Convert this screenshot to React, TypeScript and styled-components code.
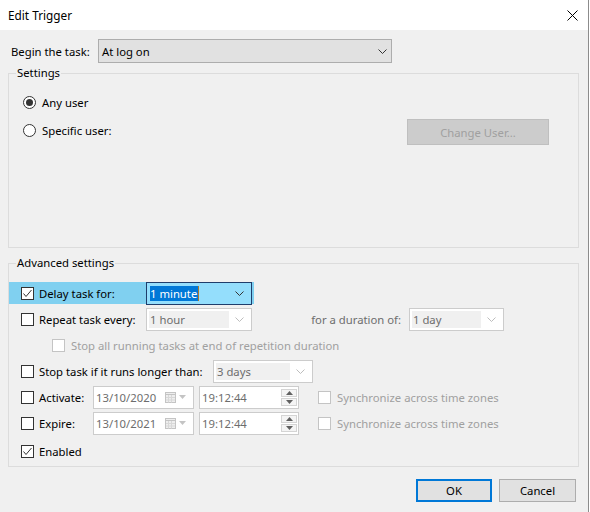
import styled, { createGlobalStyle } from 'styled-components';

const GlobalStyle = createGlobalStyle`
    html, body {
        margin: 0;
        padding: 0;
        background: #ffffff;
    }
    body {
        font-family: "Noto Sans", "DejaVu Sans", sans-serif;
        font-size: 11.3px;
        color: #000000;
    }
    * {
        box-sizing: border-box;
    }
`;

const Chevron = ({ color }: { color: string }) => (
    <svg width="9" height="5" viewBox="0 0 9 5">
        <polyline points="0.5,0.5 4.5,4.5 8.5,0.5" fill="none" stroke={color} strokeWidth="1" />
    </svg>
);

const CheckMark = () => (
    <svg width="11" height="11" viewBox="0 0 11 11">
        <polyline points="1.5,5.5 4,8.5 9.5,2" fill="none" stroke="#333333" strokeWidth="1" />
    </svg>
);

const CalendarIcon = () => (
    <svg width="11" height="11" viewBox="0 0 11 11">
        <rect x="0.5" y="0.5" width="10" height="10" fill="#eeeeee" stroke="#c4c4c4" />
        <line x1="0.5" y1="2.5" x2="10.5" y2="2.5" stroke="#c4c4c4" />
        <line x1="3.5" y1="3" x2="3.5" y2="10.5" stroke="#d8d8d8" />
        <line x1="6.5" y1="3" x2="6.5" y2="10.5" stroke="#d8d8d8" />
        <line x1="1" y1="5.5" x2="10" y2="5.5" stroke="#d8d8d8" />
        <line x1="1" y1="8" x2="10" y2="8" stroke="#d8d8d8" />
    </svg>
);

const Triangle = ({ up, color }: { up?: boolean; color: string }) => (
    <svg width="7" height="4" viewBox="0 0 7 4">
        <polygon points={up ? '0,4 7,4 3.5,0' : '0,0 7,0 3.5,4'} fill={color} />
    </svg>
);

const Checkbox = ({ checked, disabled }: { checked?: boolean; disabled?: boolean }) => (
    <CheckBoxFrame $disabled={disabled}>{checked ? <CheckMark /> : null}</CheckBoxFrame>
);

const Combo = ({ value, width, active }: { value: string; width: number; active?: boolean }) => (
    <ComboBox $width={width} $active={active}>
        <ComboText $active={active}>
            {active ? (
                <>
                    <Selected>{value}</Selected>
                    <Caret />
                </>
            ) : (
                value
            )}
        </ComboText>
        <ComboArrow>
            <Chevron color={active ? '#333333' : '#bdbdbd'} />
        </ComboArrow>
    </ComboBox>
);

const DatePicker = ({ value }: { value: string }) => (
    <DateBox>
        <FieldText>{value}</FieldText>
        <DateIcons>
            <CalendarIcon />
            <Triangle color="#c4c4c4" />
        </DateIcons>
    </DateBox>
);

const TimePicker = ({ value }: { value: string }) => (
    <TimeBox>
        <FieldText>{value}</FieldText>
        <Spinner>
            <SpinButton>
                <Triangle up color="#606060" />
            </SpinButton>
            <SpinButton>
                <Triangle color="#606060" />
            </SpinButton>
        </Spinner>
    </TimeBox>
);

const App = () => {
    return (
        <>
            <GlobalStyle />
            <Window>
                <TitleBar>
                    <span>Edit Trigger</span>
                    <svg width="11" height="11" viewBox="0 0 11 11">
                        <line x1="0.5" y1="0.5" x2="10.5" y2="10.5" stroke="#000" strokeWidth="1" />
                        <line x1="10.5" y1="0.5" x2="0.5" y2="10.5" stroke="#000" strokeWidth="1" />
                    </svg>
                </TitleBar>
                <Body>
                    <TopRow>
                        <TopLabel>Begin the task:</TopLabel>
                        <Select>
                            <span>At log on</span>
                            <Chevron color="#333333" />
                        </Select>
                    </TopRow>

                    <GroupBox $top={2}>
                        <GroupLegend>Settings</GroupLegend>
                        <SettingsContent>
                            <RadioRow>
                                <RadioCircle $checked />
                                <span>Any user</span>
                            </RadioRow>
                            <RadioRow $height={26}>
                                <RadioCircle />
                                <span>Specific user:</span>
                                <ChangeUserButton disabled>Change User...</ChangeUserButton>
                            </RadioRow>
                        </SettingsContent>
                    </GroupBox>

                    <GroupBox $top={7}>
                        <GroupLegend>Advanced settings</GroupLegend>
                        <AdvancedContent>
                            <Row $indent={0}>
                                <HighlightBand>
                                    <Checkbox checked />
                                    <Label $width={107}>Delay task for:</Label>
                                    <Combo value="1 minute" width={106} active />
                                </HighlightBand>
                            </Row>
                            <Row>
                                <Checkbox />
                                <Label $width={107}>Repeat task every:</Label>
                                <Combo value="1 hour" width={106} />
                                <DurationLabel>for a duration of:</DurationLabel>
                                <Combo value="1 day" width={95} />
                            </Row>
                            <Row $indent={43}>
                                <Checkbox disabled />
                                <MutedText>Stop all running tasks at end of repetition duration</MutedText>
                            </Row>
                            <Row>
                                <Checkbox />
                                <Label $width={174}>Stop task if it runs longer than:</Label>
                                <Combo value="3 days" width={100} />
                            </Row>
                            <Row>
                                <Checkbox />
                                <Label $width={54}>Activate:</Label>
                                <DatePicker value="13/10/2020" />
                                <TimePicker value="19:12:44" />
                                <SyncOption>
                                    <Checkbox disabled />
                                    <MutedText>Synchronize across time zones</MutedText>
                                </SyncOption>
                            </Row>
                            <Row>
                                <Checkbox />
                                <Label $width={54}>Expire:</Label>
                                <DatePicker value="13/10/2021" />
                                <TimePicker value="19:12:44" />
                                <SyncOption>
                                    <Checkbox disabled />
                                    <MutedText>Synchronize across time zones</MutedText>
                                </SyncOption>
                            </Row>
                            <Row $top={2}>
                                <Checkbox checked />
                                <Label>Enabled</Label>
                            </Row>
                        </AdvancedContent>
                    </GroupBox>

                    <ButtonRow>
                        <DialogButton $primary>OK</DialogButton>
                        <DialogButton $width={77}>Cancel</DialogButton>
                    </ButtonRow>
                </Body>
            </Window>
        </>
    );
};

export default App;

const Window = styled.div`
    width: 589px;
    height: 512px;
    background-color: #f0f0f0;
    border-right: 1px solid #8c8c8c;
    display: flex;
    flex-direction: column;
    overflow: hidden;
`;

const TitleBar = styled.div`
    height: 30px;
    flex-shrink: 0;
    background-color: #ffffff;
    display: flex;
    align-items: center;
    justify-content: space-between;
    padding: 0 10px 0 8px;
    font-size: 11.8px;
`;

const Body = styled.div`
    display: flex;
    flex-direction: column;
    padding: 9px 9px 0 8px;
`;

const TopRow = styled.div`
    display: flex;
    align-items: center;
    height: 24px;
    padding-left: 3px;
`;

const TopLabel = styled.span`
    width: 87px;
`;

const Select = styled.div`
    width: 294px;
    height: 24px;
    background-color: #e1e1e1;
    border: 1px solid #adadad;
    display: flex;
    align-items: center;
    justify-content: space-between;
    padding: 0 4px 0 3px;
`;

interface GroupBoxProps {
    $top: number;
}

const GroupBox = styled.fieldset<GroupBoxProps>`
    margin: ${(props) => props.$top}px 0 0 0;
    padding: 0;
    border: 1px solid #dcdcdc;
    min-width: 0;
`;

const GroupLegend = styled.legend`
    margin-left: 7px;
    padding: 0 1px;
    line-height: 16px;
    height: 16px;
`;

const SettingsContent = styled.div`
    height: 166px;
    display: flex;
    flex-direction: column;
    padding: 12px 29px 0 14px;
    gap: 6px;
`;

interface RadioRowProps {
    $height?: number;
}

const RadioRow = styled.div<RadioRowProps>`
    height: ${(props) => props.$height ?? 18}px;
    display: flex;
    align-items: center;
    gap: 6px;
`;

interface RadioCircleProps {
    $checked?: boolean;
}

const RadioCircle = styled.span<RadioCircleProps>`
    width: 13px;
    height: 13px;
    flex-shrink: 0;
    border-radius: 50%;
    border: 1px solid #333333;
    background-color: #ffffff;
    display: flex;
    align-items: center;
    justify-content: center;

    &::after {
        content: '';
        width: 7px;
        height: 7px;
        border-radius: 50%;
        background-color: ${(props) => (props.$checked ? '#333333' : 'transparent')};
    }
`;

const ChangeUserButton = styled.button`
    margin-left: auto;
    margin-top: 4px;
    width: 142px;
    height: 26px;
    background-color: #cccccc;
    border: 1px solid #bfbfbf;
    color: #a0a0a0;
    font: inherit;
    padding: 0;
`;

const AdvancedContent = styled.div`
    height: 195px;
    display: flex;
    flex-direction: column;
    padding-top: 9px;
`;

interface RowProps {
    $indent?: number;
    $top?: number;
}

const Row = styled.div<RowProps>`
    height: 26px;
    flex-shrink: 0;
    display: flex;
    align-items: center;
    padding-left: ${(props) => props.$indent ?? 12}px;
    margin-top: ${(props) => props.$top ?? 0}px;
`;

const HighlightBand = styled.div`
    width: 245px;
    height: 22px;
    background-color: #80d0f0;
    display: flex;
    align-items: center;
    padding: 0 2px 0 12px;
`;

interface CheckBoxFrameProps {
    $disabled?: boolean;
}

const CheckBoxFrame = styled.span<CheckBoxFrameProps>`
    width: 13px;
    height: 13px;
    flex-shrink: 0;
    border: 1px solid ${(props) => (props.$disabled ? '#c4c4c4' : '#333333')};
    background-color: #ffffff;
    display: flex;
    align-items: center;
    justify-content: center;
`;

interface LabelProps {
    $width?: number;
}

const Label = styled.span<LabelProps>`
    box-sizing: content-box;
    width: ${(props) => (props.$width ? `${props.$width}px` : 'auto')};
    flex-shrink: 0;
    padding-left: 5px;
    white-space: nowrap;
`;

const MutedText = styled.span`
    padding-left: 6px;
    color: #a0a0a0;
    white-space: nowrap;
`;

const DurationLabel = styled.span`
    width: 157px;
    text-align: right;
    padding-right: 8px;
    color: #6d6d6d;
    white-space: nowrap;
`;

interface ComboBoxProps {
    $width: number;
    $active?: boolean;
}

const ComboBox = styled.div<ComboBoxProps>`
    width: ${(props) => props.$width}px;
    height: 23px;
    flex-shrink: 0;
    display: flex;
    padding: 2px;
    border: 1px solid ${(props) => (props.$active ? '#1f3d6b' : '#cccccc')};
    background-color: ${(props) => (props.$active ? '#94defc' : '#ffffff')};
`;

const ComboText = styled.div<{ $active?: boolean }>`
    flex: 1;
    display: flex;
    align-items: center;
    padding-left: 1px;
    background-color: ${(props) => (props.$active ? 'transparent' : '#f0f0f0')};
    color: ${(props) => (props.$active ? '#000000' : '#6d6d6d')};
    white-space: nowrap;
`;

const ComboArrow = styled.div`
    width: 20px;
    display: flex;
    align-items: center;
    justify-content: center;
`;

const Selected = styled.span`
    background-color: #0078d7;
    color: #ffffff;
    line-height: 15px;
    padding-right: 1px;
`;

const Caret = styled.span`
    width: 1px;
    height: 15px;
    background-color: #b07a2a;
`;

const DateBox = styled.div`
    width: 101px;
    height: 23px;
    flex-shrink: 0;
    border: 1px solid #cccccc;
    background-color: #ffffff;
    display: flex;
    align-items: center;
    padding: 0 7px 0 2px;
`;

const DateIcons = styled.div`
    margin-left: auto;
    display: flex;
    align-items: center;
    gap: 3px;
`;

const FieldText = styled.span`
    color: #6d6d6d;
    white-space: nowrap;
`;

const TimeBox = styled.div`
    width: 100px;
    height: 23px;
    flex-shrink: 0;
    margin-left: 5px;
    border: 1px solid #cccccc;
    background-color: #ffffff;
    display: flex;
    align-items: center;
    justify-content: space-between;
    padding: 0 1px 0 2px;
`;

const Spinner = styled.div`
    display: flex;
    flex-direction: column;
    gap: 1px;
`;

const SpinButton = styled.div`
    width: 16px;
    height: 8px;
    border: 1px solid #d4d4d4;
    background-color: #f4f4f4;
    display: flex;
    align-items: center;
    justify-content: center;
`;

const SyncOption = styled.div`
    display: flex;
    align-items: center;
    margin-left: 19px;
`;

const ButtonRow = styled.div`
    display: flex;
    justify-content: flex-end;
    gap: 7px;
    margin-top: 12px;
    padding-right: 3px;
`;

interface DialogButtonProps {
    $primary?: boolean;
    $width?: number;
}

const DialogButton = styled.button<DialogButtonProps>`
    width: ${(props) => props.$width ?? 76}px;
    height: 23px;
    padding: 0;
    font: inherit;
    color: #000000;
    background-color: #e1e1e1;
    border: ${(props) => (props.$primary ? '2px solid #0078d7' : '1px solid #adadad')};
`;
